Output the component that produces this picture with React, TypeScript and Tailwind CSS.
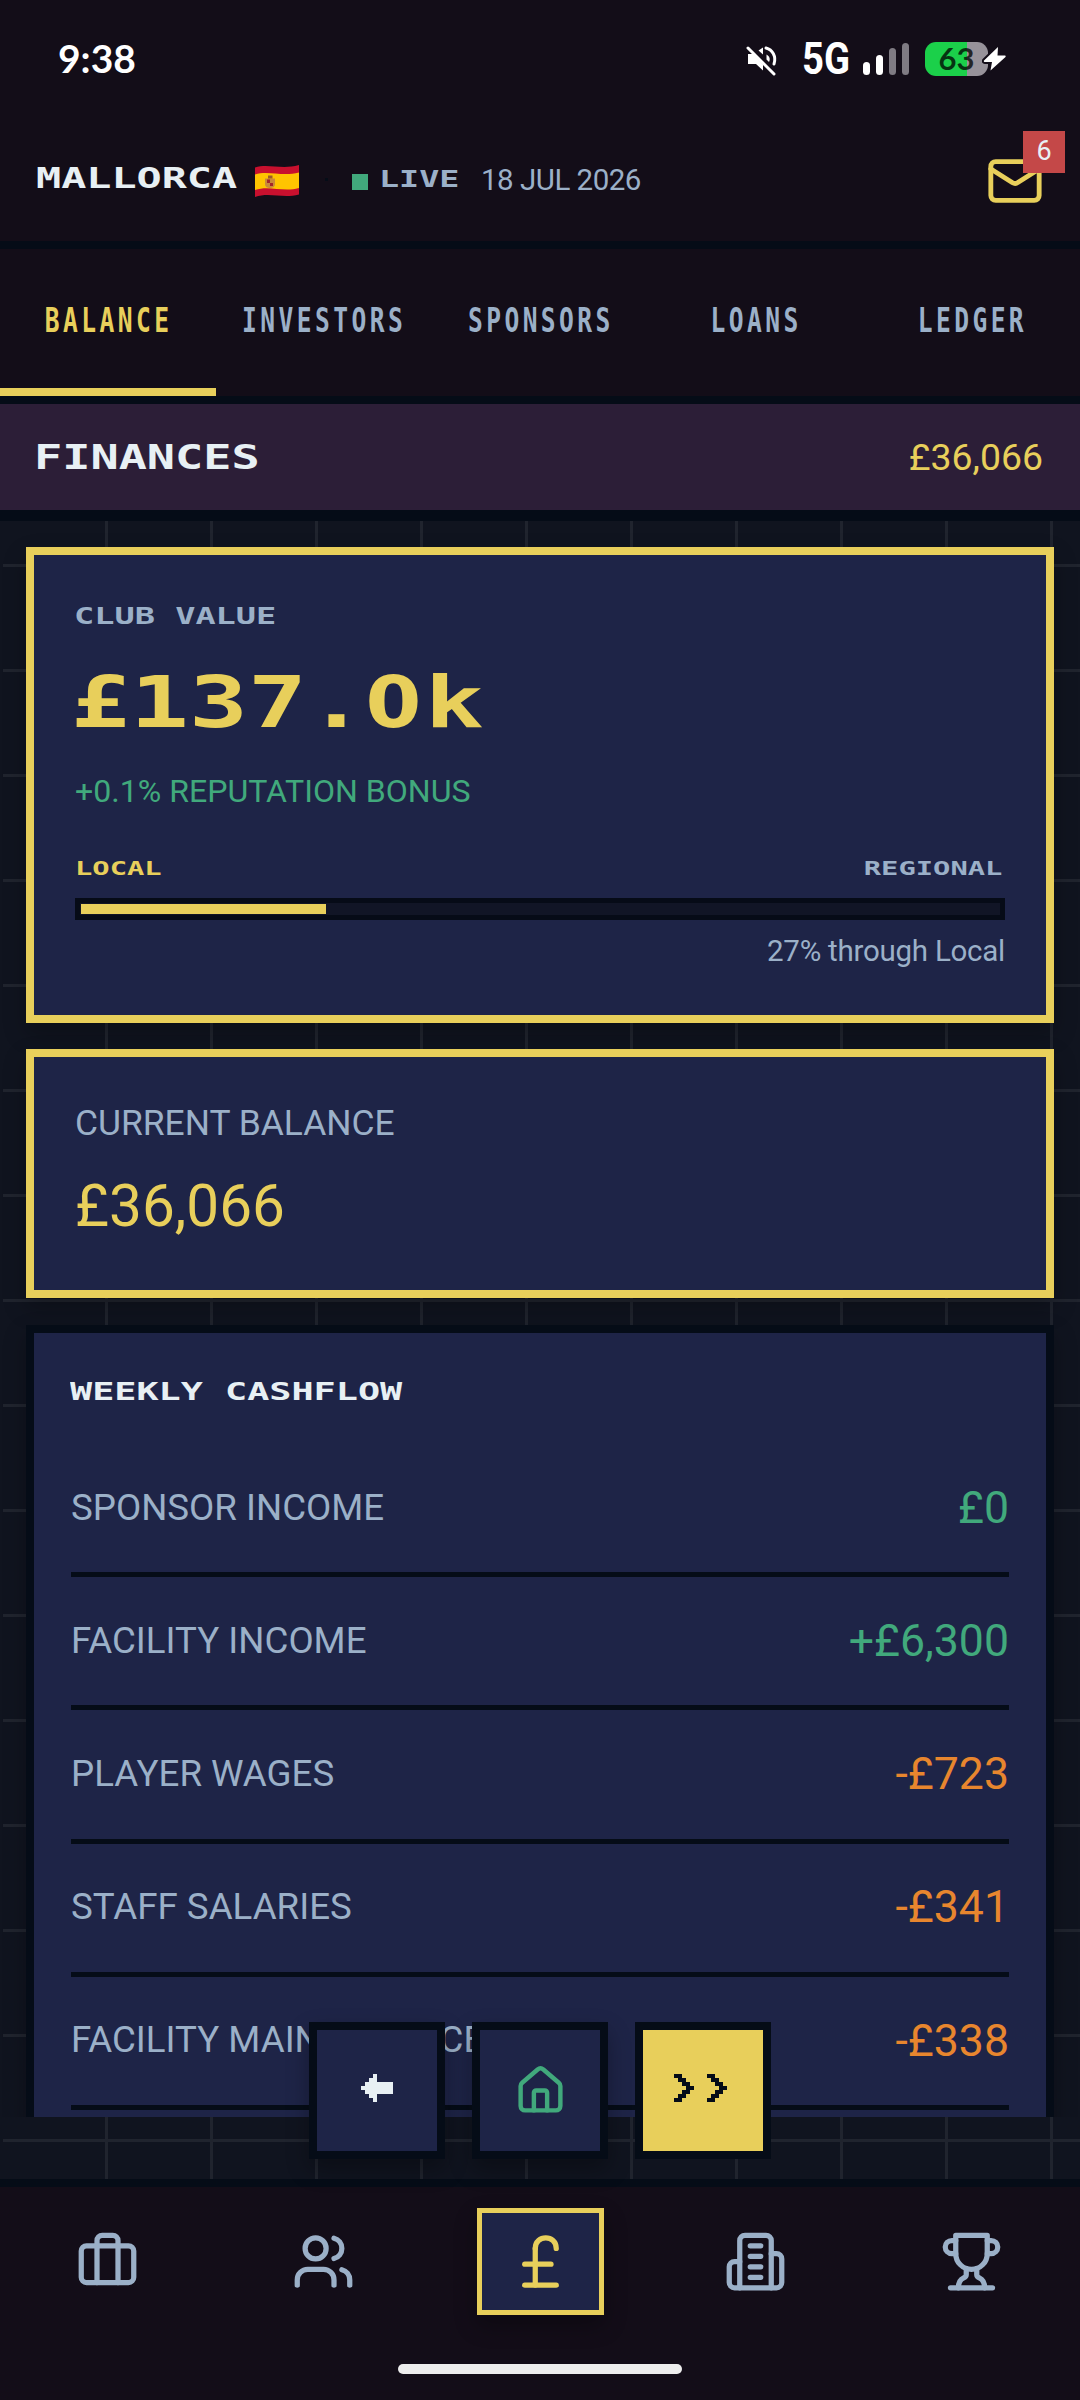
import type { ReactNode } from "react";
import clsx from "clsx";

const tabs = ["BALANCE", "INVESTORS", "SPONSORS", "LOANS", "LEDGER"];

const cashflow = [
  { label: "SPONSOR INCOME", value: "£0", positive: true },
  { label: "FACILITY INCOME", value: "+£6,300", positive: true },
  { label: "PLAYER WAGES", value: "-£723", positive: false },
  { label: "STAFF SALARIES", value: "-£341", positive: false },
  { label: "FACILITY MAINTENANCE", value: "-£338", positive: false },
];

const navIcons = [
  {
    name: "Squad",
    body: (
      <>
        <path d="M16 20V4a2 2 0 0 0-2-2h-4a2 2 0 0 0-2 2v16" />
        <rect width="20" height="14" x="2" y="6" rx="2" />
      </>
    ),
  },
  {
    name: "Players",
    body: (
      <>
        <path d="M16 21v-2a4 4 0 0 0-4-4H6a4 4 0 0 0-4 4v2" />
        <circle cx="9" cy="7" r="4" />
        <path d="M16 3.13a4 4 0 0 1 0 7.74" />
        <path d="M22 21v-2a4 4 0 0 0-3-3.87" />
      </>
    ),
  },
  {
    name: "Finances",
    body: (
      <>
        <path d="M18 7c0-5.333-8-5.333-8 0" />
        <path d="M10 7v14" />
        <path d="M6 21h12" />
        <path d="M6 13h10" />
      </>
    ),
  },
  {
    name: "Facilities",
    body: (
      <>
        <path d="M6 22V4a2 2 0 0 1 2-2h8a2 2 0 0 1 2 2v18Z" />
        <path d="M6 12H4a2 2 0 0 0-2 2v6a2 2 0 0 0 2 2h2" />
        <path d="M18 9h2a2 2 0 0 1 2 2v9a2 2 0 0 1-2 2h-2" />
        <path d="M10 6h4M10 10h4M10 14h4M10 18h4" />
      </>
    ),
  },
  {
    name: "Competitions",
    body: (
      <>
        <path d="M6 9H4.5a2.5 2.5 0 0 1 0-5H6" />
        <path d="M18 9h1.5a2.5 2.5 0 0 0 0-5H18" />
        <path d="M4 22h16" />
        <path d="M10 14.66V17c0 .55-.47.98-.97 1.21C7.85 18.75 7 20.24 7 22" />
        <path d="M14 14.66V17c0 .55.47.98.97 1.21C16.15 18.75 17 20.24 17 22" />
        <path d="M18 2H6v7a6 6 0 0 0 12 0V2Z" />
      </>
    ),
  },
];

function LineIcon({ size, children }: { size: number; children: ReactNode }) {
  return (
    <svg
      width={size}
      height={size}
      viewBox="0 0 24 24"
      fill="none"
      stroke="currentColor"
      strokeWidth="2"
      strokeLinecap="round"
      strokeLinejoin="round"
    >
      {children}
    </svg>
  );
}

// Wide retro lettering used for headings
function PixelText({ className, children }: { className?: string; children: ReactNode }) {
  return (
    <span
      className={clsx(
        "inline-block whitespace-pre font-['DejaVu_Sans_Mono',monospace] font-bold leading-none",
        className
      )}
    >
      {children}
    </span>
  );
}

function StatusBar() {
  return (
    <div className="flex h-[117px] items-center justify-between pl-[58px] pr-[73px] text-white">
      <span className="font-['Lato',sans-serif] text-[39px] font-bold leading-none">9:38</span>
      <div className="flex items-center">
        <svg width="32" height="32" viewBox="0 0 32 32" fill="none" className="mt-1">
          <path d="M2 9h5l10 10.5v6L10 19H2z" fill="#fff" />
          <path d="M12.5 5.5 17 2.500v7z" fill="#fff" />
          <path d="M20.500 9.500c3 1.500 4 4.500 2.500 7.500l-2.500-2.500z" fill="#fff" />
          <path d="M20 3c6.500 1.500 10.500 8.500 8 16" stroke="#fff" strokeWidth="3" strokeLinecap="round" />
          <path d="m2 3 26 26" stroke="#fff" strokeWidth="3" strokeLinecap="round" />
        </svg>
        <span className="ml-[24px] w-[61px] origin-left scale-x-[0.85] font-['Roboto',sans-serif] text-[45px] font-bold leading-none">
          5G
        </span>
        <div className="flex h-8 items-end gap-[6px]">
          <div className="h-[13px] w-[7px] rounded-full bg-white" />
          <div className="h-[20px] w-[7px] rounded-full bg-white" />
          <div className="h-[27px] w-[7px] rounded-full bg-[#7f7b83]" />
          <div className="h-[32px] w-[7px] rounded-full bg-[#7f7b83]" />
        </div>
        <div className="ml-[16px] flex h-[34px] w-[63px] items-center justify-center rounded-[11px] bg-[linear-gradient(to_right,#1bd04a_42px,#97929a_42px)]">
          <span className="font-['Lato',sans-serif] text-[31px] font-bold leading-none text-black/75">63</span>
        </div>
        <svg width="25" height="30" viewBox="0 0 25 30" className="-ml-[6px]">
          <path
            d="M16 3 2 16.500c-.5.8 0 1.500.8 1.500H10l-1.500 8.500L23.500 13c.5-.8 0-1.500-.8-1.500H15.500z"
            fill="#fff"
            stroke="#130d18"
            strokeWidth="4"
            strokeLinejoin="round"
            paintOrder="stroke"
          />
        </svg>
      </div>
    </div>
  );
}

function SpainFlag() {
  return (
    <svg width="44" height="32" viewBox="0 0 44 32">
      <path d="M0 2.500C13-2 26 5 44 0v29.500C28 34 15 27 0 32z" fill="#c8102e" />
      <path d="M0 9.500C13 5 27 12 44 7.500V23C28 27.500 14 20 0 25z" fill="#ffc400" />
      <path d="M10 13.500h10v5.500c0 3-2.500 4-5 4s-5-1-5-4z" fill="#c98a3a" />
      <path d="M12 14.500h3v3.500h-3z" fill="#a3262a" />
      <path d="M15 18h3v3h-3z" fill="#a3262a" />
      <path d="M13 10.500h4.500v3H13z" fill="#9c5a2b" />
    </svg>
  );
}

function Header() {
  return (
    <div className="flex h-[124px] items-center pl-[36px] pr-[36px]">
      <div className="w-[219px]">
        <PixelText className="origin-left scale-x-[1.44] text-[29px]">MALLORCA</PixelText>
      </div>
      <div className="pt-[3px]">
        <SpainFlag />
      </div>
      <div className="ml-[26px] size-[3px] bg-[#050c17]" />
      <div className="ml-[24px] mt-[5px] size-[16px] bg-[#41a97c]" />
      <div className="ml-[11px] w-[102px] pt-[4px] text-[#9bb0c8]">
        <PixelText className="origin-left scale-x-[1.42] text-[23.5px]">LIVE</PixelText>
      </div>
      <span className="pt-[3px] text-[29.5px] leading-none tracking-[-0.5px] text-[#9bb0c8]">18 JUL 2026</span>
      <div className="relative ml-auto mt-[3px] text-[#e8cf5b]">
        <LineIcon size={58}>
          <path d="m22 7-8.991 5.727a2 2 0 0 1-2.009 0L2 7" />
          <rect x="2" y="4" width="20" height="16" rx="2" />
        </LineIcon>
        <div className="absolute -right-[21px] -top-[21px] flex size-[42px] items-center justify-center bg-[#c44848] text-[27px] leading-none text-[#e8f0f4]">
          6
        </div>
      </div>
    </div>
  );
}

function Tabs() {
  return (
    <div className="grid h-[163px] grid-cols-5 border-y-[8px] border-[#050c17]">
      {tabs.map((tab, i) => (
        <div
          key={tab}
          className={clsx(
            "flex items-center justify-center border-b-[8px] pl-px pt-[3px]",
            i === 0 ? "border-[#e8cf5b] text-[#e8cf5b]" : "border-transparent text-[#9bb0c8]"
          )}
        >
          <PixelText className="scale-x-[0.745] text-[33px] tracking-[4.6px]">{tab}</PixelText>
        </div>
      ))}
    </div>
  );
}

function ClubValueCard() {
  return (
    <div className="flex h-[476px] flex-col border-[8px] border-[#e8cf5b] bg-[#1e2447] pl-[41px] pr-[41px] pt-[50px] shadow-[0_10px_21px_rgba(0,0,0,0.25)]">
      <div className="-ml-px h-[24px] text-[#9bb0c8]">
        <PixelText className="block origin-left scale-x-[1.43] text-[23.5px]">CLUB VALUE</PixelText>
      </div>
      <div className="-ml-[4px] mt-[38px] h-[72px] text-[#e8cf5b]">
        <PixelText className="block origin-left scale-x-[1.37] text-[71.5px]">
          £137.
          <span className="inline-block w-[43px] origin-left scale-x-[0.82] font-['DejaVu_Sans',sans-serif]">0</span>k
        </PixelText>
      </div>
      <div className="mt-[36px] h-[32px] text-[32.1px] leading-none text-[#41a97c]">+0.1% REPUTATION BONUS</div>
      <div className="mt-[52px] flex h-[20px] justify-between">
        <PixelText className="origin-left scale-x-[1.5] text-[19.2px] text-[#e8cf5b]">LOCAL</PixelText>
        <PixelText className="mr-[3px] origin-right scale-x-[1.5] text-[19.2px] text-[#9bb0c8]">REGIONAL</PixelText>
      </div>
      <div className="mt-[19px] h-[22px] border-[5px] border-[#060b17] bg-[#111526] pl-px pt-px">
        <div className="h-[10px] w-[26.7%] bg-[#e8cf5b]" />
      </div>
      <div className="mt-[17px] text-right text-[29.5px] leading-none tracking-[-0.25px] text-[#9bb0c8]">
        27% through Local
      </div>
    </div>
  );
}

function BalanceCard() {
  return (
    <div className="mt-[26px] flex h-[249px] flex-col border-[8px] border-[#e8cf5b] bg-[#1e2447] pl-[41px] pt-[49px] shadow-[0_10px_21px_rgba(0,0,0,0.25)]">
      <div className="h-[36px] text-[35.4px] leading-none text-[#9bb0c8]">CURRENT BALANCE</div>
      <div className="mt-[35px] text-[58.5px] leading-none text-[#e8cf5b]">£36,066</div>
    </div>
  );
}

function CashflowCard() {
  return (
    <div className="mt-[27px] h-[900px] border-[8px] border-[#050c17] bg-[#1e2447] px-[37px] pt-[47px] shadow-[0_10px_21px_rgba(0,0,0,0.25)]">
      <div className="-ml-px h-[25px] text-[#e8f0f4]">
        <PixelText className="block origin-left scale-x-[1.49] text-[24.7px]">WEEKLY CASHFLOW</PixelText>
      </div>
      <div className="mt-[39px]">
        {cashflow.map(row => (
          <div
            key={row.label}
            className="flex h-[133.2px] items-center justify-between border-b-[5px] border-[#050c17]"
          >
            <span className="text-[36.7px] leading-none text-[#9bb0c8]">{row.label}</span>
            <span
              className={clsx("text-[44.6px] leading-none", row.positive ? "text-[#41a97c]" : "text-[#e8862e]")}
            >
              {row.value}
            </span>
          </div>
        ))}
      </div>
    </div>
  );
}

function FloatingControls() {
  return (
    <div className="absolute bottom-[20px] left-[309px] flex gap-[27px]">
      <button
        aria-label="Back"
        className="flex h-[137px] w-[136px] items-center justify-center border-[8px] border-[#050c17] bg-[#1e2447] text-[#e8f0f4] shadow-[0_10px_21px_rgba(0,0,0,0.3)]"
      >
        <svg width="32" height="28" viewBox="0 0 8 7" shapeRendering="crispEdges" className="-mt-[5px]">
          <path d="M3 0h1v2h4v3H4v2H3V6H2V5H1V4H0V3h1V2h1V1h1z" fill="currentColor" />
        </svg>
      </button>
      <button
        aria-label="Home"
        className="flex h-[137px] w-[136px] items-center justify-center border-[8px] border-[#050c17] bg-[#1e2447] text-[#41a97c] shadow-[0_10px_21px_rgba(0,0,0,0.3)]"
      >
        <LineIcon size={53}>
          <path d="M15 21v-8a1 1 0 0 0-1-1h-4a1 1 0 0 0-1 1v8" />
          <path d="M3 10a2 2 0 0 1 .709-1.528l7-5.999a2 2 0 0 1 2.582 0l7 5.999A2 2 0 0 1 21 10v9a2 2 0 0 1-2 2H5a2 2 0 0 1-2-2z" />
        </LineIcon>
      </button>
      <button
        aria-label="Advance"
        className="flex h-[137px] w-[136px] items-center justify-center gap-[13px] border-[8px] border-[#050c17] bg-[#e8cf5b] pr-[6px] text-[#050c17]"
      >
        {[0, 1].map(i => (
          <svg key={i} width="20" height="28" viewBox="0 0 5 7" shapeRendering="crispEdges" className="-mt-[5px]">
            <path d="M0 0h2v1h1v1h1v1h1v1H4v1H3v1H2v1H0V6h1V5h1V4h1V3H2V2H1V1H0z" fill="currentColor" />
          </svg>
        ))}
      </button>
    </div>
  );
}

function BottomNav() {
  return (
    <nav className="flex h-[221px] flex-col items-center border-t-[8px] border-[#050c17] bg-[#130d18]">
      <div className="grid h-[149px] w-full grid-cols-5">
        {navIcons.map((item, i) => (
          <div key={item.name} className="flex items-center justify-center">
            <div
              className={clsx(
                "flex h-[107px] w-[127px] items-center justify-center border-[5px]",
                i === 2
                  ? "border-[#e8cf5b] bg-[#1e2447] text-[#e8cf5b] shadow-[0_10px_21px_rgba(0,0,0,0.3)]"
                  : "border-transparent pr-px text-[#9bb0c8]"
              )}
            >
              <LineIcon size={63}>{item.body}</LineIcon>
            </div>
          </div>
        ))}
      </div>
      <div className="mt-[28px] h-[10px] w-[284px] rounded-[5px] bg-[#ededed]" />
    </nav>
  );
}

export default function App() {
  return (
    <div className="flex h-[2400px] w-[1080px] flex-col overflow-hidden bg-[#130d18] font-['Roboto',sans-serif] text-[#e8f0f4]">
      <StatusBar />
      <Header />
      <Tabs />
      <div className="flex h-[117px] items-center justify-between border-b-[11px] border-[#050c17] bg-[#2c1e37] pl-[34px] pr-[37px]">
        <PixelText className="origin-left scale-x-[1.42] text-[33px]">FINANCES</PixelText>
        <span className="pt-px text-[37.4px] leading-none text-[#e8cf5b]">£36,066</span>
      </div>
      {/* Grid lines every 105px behind the cards */}
      <main className="relative flex-1 border-l-[3px] border-[#10141f] bg-[#10141f] bg-[linear-gradient(to_right,#20242e_3px,transparent_3px),linear-gradient(to_bottom,#20242e_3px,transparent_3px)] bg-[position:102px_0,0_43px] bg-[size:105px_105px]">
        <div className="-ml-[3px] h-[1596px] overflow-hidden px-[26px] pt-[26px]">
          <ClubValueCard />
          <BalanceCard />
          <CashflowCard />
        </div>
        <div className="absolute -left-[3px] bottom-0">
          <FloatingControls />
        </div>
      </main>
      <BottomNav />
    </div>
  );
}
